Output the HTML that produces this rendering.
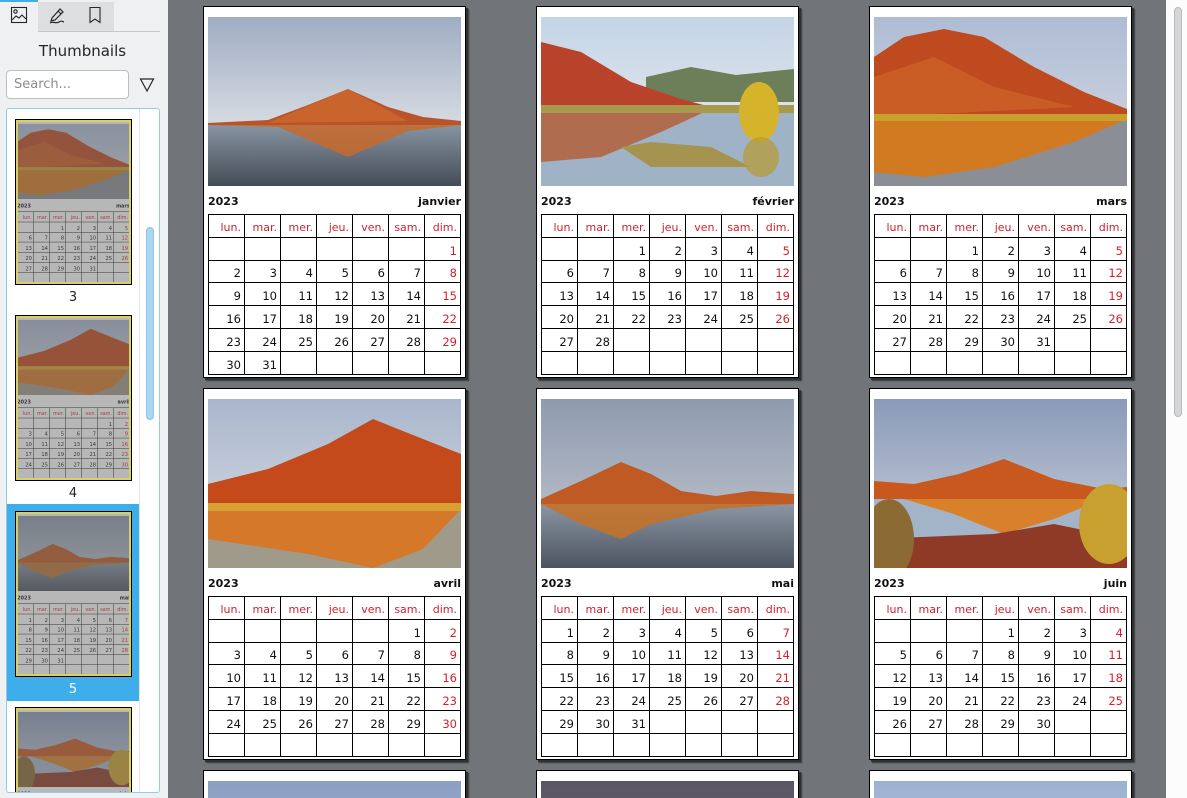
<!DOCTYPE html>
<html><head><meta charset="utf-8">
<style>
*{box-sizing:border-box;margin:0;padding:0}
body{width:1187px;height:798px;overflow:hidden;background:#eff0f1;font-family:"DejaVu Sans","Liberation Sans",sans-serif;position:relative}
#view{position:absolute;left:168px;top:0;width:998px;height:798px;background:#717478;overflow:hidden}
#vsb{position:absolute;left:1166px;top:0;width:21px;height:798px;background:#fcfcfc}
#vsb div{position:absolute;left:8px;top:7px;width:8px;height:410px;border-radius:4px;background:#d4d6d7;border:1px solid #b8babc}
.page{position:absolute;width:263px;height:372px;background:#fff;border:1px solid #000;box-shadow:2px 2px 0 #2e3032,3px 3px 1px #3a3c3e}
.photo{position:absolute;left:4px;top:10px;width:253px;height:169px;overflow:hidden}
.photo svg{display:block}
.yr{position:absolute;left:4px;top:188px;font-size:11px;font-weight:bold;color:#111}
.mo{position:absolute;right:4px;top:188px;font-size:11px;font-weight:bold;color:#111}
table{position:absolute;left:4px;top:207px;width:253px;height:160px;border-collapse:collapse;table-layout:fixed}
td{border:1px solid #000;font-size:11.5px;text-align:right;vertical-align:bottom;padding:0 3px 2px 0;color:#111;height:22.8px;line-height:14px}
td.r{color:#d4202a}
tr.h td{color:#d4202a;font-size:11px}
/* sidebar */
#tabs{position:absolute;left:0;top:0;width:160px;height:32px;border-bottom:1px solid #c5c7c9}
.tab{position:absolute;top:2px;height:29px;width:38px;background:#dcdee0}
.tab.sel{background:#eff0f1;top:0;height:32px;border-top:2px solid #3daee9}
#ttl{position:absolute;left:0;width:165px;top:42px;text-align:center;font-size:15px;color:#232629}
#search{position:absolute;left:6px;top:70px;width:123px;height:29px;background:#fff;border:1px solid #bcbec0;border-radius:4px;font-size:13px;color:#8a8d90;padding:6px 0 0 7px}
#list{position:absolute;left:6px;top:108px;width:154px;height:685px;background:#fff;border:1px solid #93cce8;border-radius:3px;overflow:hidden}
#lsep{position:absolute;left:132px;top:0;width:1px;height:100%;background:#e4e6e8}
#lsb{position:absolute;left:139px;top:118px;width:8px;height:193px;border-radius:4px;background:#a9d6f1;border:1px solid #8cc6ea}
.sel5{position:absolute;left:0;top:395px;width:132px;height:197px;background:#3daee9}
.th{position:absolute;left:8px;width:117px;height:166px;overflow:hidden;border:1px solid #000}
.th .inner{position:absolute;left:-1px;top:-1px;transform:scale(0.445);transform-origin:0 0}
.th .ov{position:absolute;inset:0;background:rgba(95,95,95,.45);border:2px solid #d6cf6a}
.lbl{position:absolute;left:0;width:132px;text-align:center;font-size:13px;color:#232629}
</style></head><body>
<div id="tabs">
 <div class="tab sel" style="left:0"></div>
 <div class="tab" style="left:38px"></div>
 <div class="tab" style="left:76px"></div>
 <svg style="position:absolute;left:10px;top:6px" width="18" height="18" viewBox="0 0 18 18" fill="none" stroke="#232629" stroke-width="1.1"><rect x="1.5" y="1.5" width="15" height="15"/><circle cx="5.5" cy="5.5" r="1.7"/><path d="M2 14 L6 10 L9 12 L12 9 L16 13"/></svg>
 <svg style="position:absolute;left:47px;top:5px" width="20" height="20" viewBox="0 0 20 20" fill="none" stroke="#232629" stroke-width="1.2"><path d="M5 13 L13 4 L16 7 L8 15 L4 16 Z M11 6 L14 9"/><path d="M3 18 C6 16 9 19 12 17 S16 17 17 17"/></svg>
 <svg style="position:absolute;left:88px;top:6px" width="14" height="18" viewBox="0 0 14 18" fill="none" stroke="#232629" stroke-width="1.1"><path d="M2 1.5 H12 V16.5 L7 13 L2 16.5 Z"/></svg>
</div>
<div id="ttl">Thumbnails</div>
<div id="search">Search...</div>
<svg style="position:absolute;left:139px;top:77px" width="16" height="16" viewBox="0 0 16 16" fill="none" stroke="#232629" stroke-width="1.2"><path d="M1.5 2 H14.5 L8 14 Z"/></svg>
<div id="list">
 <div class="sel5"></div>
 <div id="lsep"></div>
 <div id="lsb"></div>
 <div id="thumbs"></div>
</div>
<div id="view"><div id="pages"></div></div>
<div id="vsb"><div></div></div>
<script>
var scenes={
jan:'<defs><linearGradient id="sJ" x1="0" y1="0" x2="0" y2="1"><stop offset="0" stop-color="#9fadc3"/><stop offset=".6" stop-color="#d3d8e0"/><stop offset="1" stop-color="#e8e6e0"/></linearGradient><linearGradient id="wJ" x1="0" y1="0" x2="0" y2="1"><stop offset="0" stop-color="#8a96a4"/><stop offset="1" stop-color="#444c56"/></linearGradient></defs><rect width="253" height="169" fill="url(#sJ)"/><rect y="106" width="253" height="63" fill="url(#wJ)"/><polygon points="0,106 60,103 100,88 140,72 180,90 215,100 253,104 253,108 0,108" fill="#b8542a"/><polygon points="60,106 140,72 200,104" fill="#c9642c"/><polygon points="0,108 70,110 140,140 200,114 253,108" fill="#c86a2a" opacity=".85"/>',
feb:'<defs><linearGradient id="sF" x1="0" y1="0" x2="0" y2="1"><stop offset="0" stop-color="#c4d4e6"/><stop offset="1" stop-color="#eef0ee"/></linearGradient></defs><rect width="253" height="169" fill="url(#sF)"/><polygon points="105,60 150,50 195,58 253,52 253,85 105,85" fill="#6d7f58"/><rect y="90" width="253" height="79" fill="#9fb2c6"/><polygon points="0,25 40,35 90,65 140,82 170,90 0,92" fill="#b8432a"/><polygon points="0,92 170,92 120,115 60,140 0,145" fill="#b45a30" opacity=".8"/><rect y="88" width="253" height="8" fill="#a89a4c"/><polygon points="80,130 110,125 170,130 210,150 110,150" fill="#a49450"/><ellipse cx="218" cy="95" rx="20" ry="30" fill="#d5b42c"/><ellipse cx="220" cy="140" rx="18" ry="20" fill="#b89a30" opacity=".7"/>',
mar:'<defs><linearGradient id="sM" x1="0" y1="0" x2="0" y2="1"><stop offset="0" stop-color="#aebcd4"/><stop offset="1" stop-color="#d8dde4"/></linearGradient></defs><rect width="253" height="169" fill="url(#sM)"/><rect y="100" width="253" height="69" fill="#8b8e94"/><polygon points="0,40 30,20 70,12 110,20 160,50 210,75 253,92 253,102 0,102" fill="#bf4a20"/><polygon points="0,60 60,40 120,70 200,90 0,100" fill="#d26a2a" opacity=".6"/><polygon points="0,102 253,102 200,125 120,150 50,160 0,155" fill="#d27a22"/><rect y="97" width="253" height="7" fill="#c8a02c"/>',
apr:'<defs><linearGradient id="sA" x1="0" y1="0" x2="0" y2="1"><stop offset="0" stop-color="#a9b6cc"/><stop offset="1" stop-color="#dde0e6"/></linearGradient></defs><rect width="253" height="169" fill="url(#sA)"/><rect y="108" width="253" height="61" fill="#a09a8a"/><polygon points="0,85 60,70 120,45 165,20 215,40 253,55 253,110 0,110" fill="#c44a1c"/><polygon points="0,110 253,110 215,150 165,169 100,155 0,140" fill="#d6782a"/><rect y="104" width="253" height="8" fill="#d8a030"/>',
may:'<defs><linearGradient id="sY" x1="0" y1="0" x2="0" y2="1"><stop offset="0" stop-color="#8e9aae"/><stop offset="1" stop-color="#c8ccd4"/></linearGradient><linearGradient id="wY" x1="0" y1="0" x2="0" y2="1"><stop offset="0" stop-color="#8c96a4"/><stop offset="1" stop-color="#4c5460"/></linearGradient></defs><rect width="253" height="169" fill="url(#sY)"/><rect y="104" width="253" height="65" fill="url(#wY)"/><polygon points="0,100 40,82 80,63 110,75 140,92 175,97 210,92 253,95 253,105 0,105" fill="#c05a24"/><polygon points="0,105 253,105 175,110 110,125 80,140 40,125" fill="#c2722a" opacity=".9"/>',
jun:'<defs><linearGradient id="sU" x1="0" y1="0" x2="0" y2="1"><stop offset="0" stop-color="#8a9ab8"/><stop offset="1" stop-color="#d2d6de"/></linearGradient></defs><rect width="253" height="169" fill="url(#sU)"/><rect y="100" width="253" height="69" fill="#a4b4c8"/><polygon points="0,82 40,85 85,75 130,60 180,80 230,90 253,88 253,100 0,100" fill="#c9581e"/><polygon points="30,100 230,100 180,120 130,135 80,115" fill="#d8802a"/><polygon points="0,140 120,135 180,125 253,140 253,169 0,169" fill="#8e3a26"/><ellipse cx="15" cy="140" rx="25" ry="40" fill="#8c6a34"/><ellipse cx="235" cy="125" rx="30" ry="40" fill="#c8a030"/>'
};
var months=[['janvier',7,31,'jan'],['février',3,28,'feb'],['mars',3,31,'mar'],['avril',6,30,'apr'],['mai',1,31,'may'],['juin',4,30,'jun']];
function pageHTML(m){
 var h='<div class="photo"><svg width="253" height="169" viewBox="0 0 253 169">'+scenes[m[3]]+'</svg></div><div class="yr">2023</div><div class="mo">'+m[0]+'</div><table><tr class="h">';
 ['lun.','mar.','mer.','jeu.','ven.','sam.','dim.'].forEach(function(d){h+='<td>'+d+'</td>'});
 h+='</tr>';var day=1-(m[1]-1);
 for(var r=0;r<6;r++){h+='<tr>';for(var c=0;c<7;c++){var t=(day>=1&&day<=m[2])?day:'';h+='<td'+(c==6?' class="r"':'')+'>'+t+'</td>';day++;}h+='</tr>';}
 return h+'</table>';
}
var P='',xs=[35,368,701];
months.forEach(function(m,i){P+='<div class="page" style="left:'+xs[i%3]+'px;top:'+(6+382*Math.floor(i/3))+'px">'+pageHTML(m)+'</div>';});
var bot=['#8fa6c8','#4e4c58','#9eb4d4'];
for(var i=0;i<3;i++){P+='<div class="page" style="left:'+xs[i]+'px;top:770px"><div class="photo" style="background:linear-gradient(#'+['8aa0c4','5a5664','9cb2d2'][i]+',#'+['b4c2d8','7a7480','c0cce0'][i]+')"></div></div>';}
document.getElementById('pages').innerHTML=P;
var T='';
[2,3,4,5].forEach(function(mi,k){var y=10+196*k;
 T+='<div class="th" style="top:'+y+'px"><div class="inner"><div class="page" style="left:0;top:0;box-shadow:none">'+pageHTML(months[mi])+'</div></div><div class="ov"></div></div>';
 if(k<3)T+='<div class="lbl" style="top:'+(y+171)+'px;'+(k==2?'color:#fff':'')+'">'+(mi+1)+'</div>';});
document.getElementById('thumbs').innerHTML=T;
</script>
</body></html>
